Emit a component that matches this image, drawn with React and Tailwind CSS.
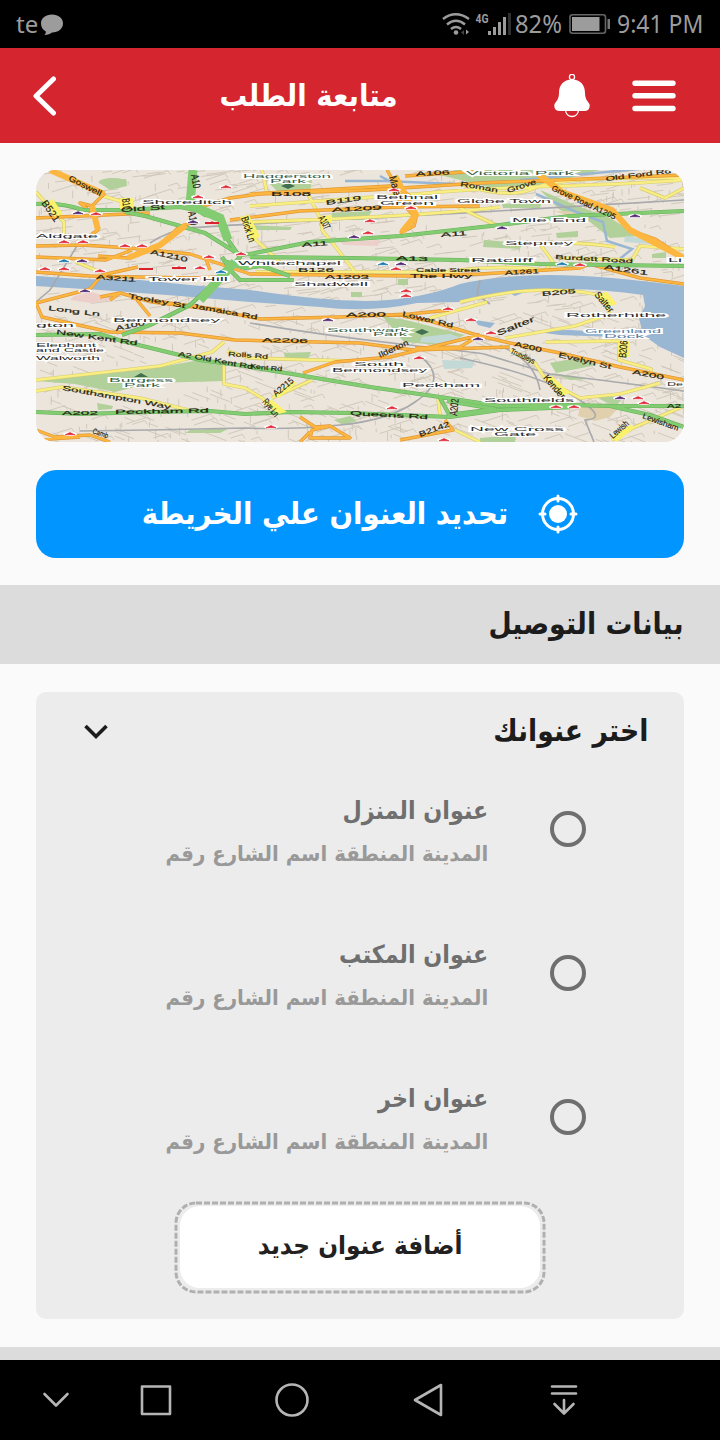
import React from "react";

const ROADS = {
  yellow: [
    "M36 192L52 210L64 222V234", "M100 195L133 205", "M126 207V199", "M262 170L267 193", "M306 190L322 222L322 230L338 250L358 276",
    "M250 206Q330 200 360 198T440 192T560 186T684 180", "M250 222Q320 220 390 216T500 207", "M246 215L256 240L280 262", "M460 184Q510 200 535 188T684 178",
    "M458 207L500 227", "M540 244L553 262L545 270Q500 265 460 270", "M560 258L632 260L640 246L684 249", "M510 245Q570 240 615 247", "M255 272H460",
    "M76 262L100 272", "M460 302Q510 290 545 290T602 296L610 314L575 326L505 338", "M545 342L620 341", "M619 348V360L651 369V376", "M510 350L535 363L546 380L580 398L620 394L660 383",
    "M36 380L160 366L212 352L224 342", "M36 391L62 387L140 398L188 410", "M224 364V384L245 388L262 398L280 414", "M227 351L250 358L350 361", "M312 380L272 398M438 398L440 415", "M684 406L635 427L612 440", "M455 430L480 442", "M640 188L665 198L684 188", "M430 318L487 302"
  ],
  orange: [
    "M50 170L104 194L92 206L80 203L94 215L98 230L92 234", "M36 246L82 245L130 248L190 254L250 274L410 276L480 274L580 268L590 264L640 278L684 284",
    "M36 257L106 260L132 250M98 256L128 258L160 245L178 228L190 223", "M36 272L90 276L190 278L222 277M36 303L90 289L102 275L138 267", "M190 210L230 198L260 194L370 190L480 183L684 175", "M36 218L150 213M230 220L300 211L400 207L480 206",
    "M250 194L390 186L400 201L416 218L414 226L400 233", "M387 170L395 184L410 196", "M405 176L480 171", "M538 174L562 192L612 210L630 230L655 239L684 258",
    "M36 303L42 317L110 332L180 333L235 340L360 343L413 350L510 347", "M100 297L120 293L152 302L210 309L260 319L340 317L410 314L449 310", "M137 300L150 316M120 293L110 300M131 298L222 310", "M403 316L430 321L480 336L510 343L560 353L620 367L684 380",
    "M303 373L335 362L390 357L480 335M480 335L460 347L415 348M205 257L210 270M300 417L315 427L330 426L350 438L310 438L312 430L330 426M310 432L300 442M445 420L453 430L400 440", "M36 430L55 437L90 435L110 442M36 440L80 437"
  ],
  green: [
    "M193 170L190 205L205 215L220 217L228 240L240 257L232 266L190 305L150 325L122 335", "M36 204Q60 202 83 210L125 210L180 207L205 212L222 219M125 212L145 216L205 233L240 255L250 254L310 242L400 236L500 225L570 216L684 211",
    "M250 257L350 258L460 260L540 264L684 266", "M222 257L232 272L240 280L294 280M224 261L245 268L262 266L290 276", "M36 335L100 334L122 341L200 360L245 366L310 377L370 387L440 397L500 406L570 405L610 406L684 406",
    "M36 412L80 414L150 412L210 411L245 414L290 412L350 413L450 417L500 410L575 407", "M440 398L450 416M447 401L495 409L455 414M610 406L650 415L684 427"
  ],
};

const LABELS = [
  [243, 178, 88, "Haggerston", "#365f45"], [270, 183, 36, "Park", "#365f45"], [466, 175, 108, "Victoria Park", "#365f45"], [142, 204, 90, "Shoreditch"],
  [376, 199, 62, "Bethnal"], [380, 204.500, 54, "Green"], [457, 203, 94, "Globe Town"], [512, 222, 74, "Mile End"], [505, 245, 68, "Stepney"], [36, 238, 62, "Aldgate"],
  [148, 281, 80, "Tower Hill"], [238, 265, 103, "Whitechapel"], [294, 286, 74, "Shadwell"], [471, 262, 62, "Ratcliff"], [113, 321.500, 107, "Bermondsey"], [36, 327, 38, "gton"],
  [36, 346.500, 60, "Elephant"], [36, 352, 68, "and Castle"], [36, 360, 64, "Walworth"], [566, 316.500, 100, "Rotherhithe"], [585, 333, 76, "Greenland", "#557da3"], [604, 338, 40, "Dock", "#557da3"],
  [327, 331.500, 82, "Southwark", "#365f45"], [373, 336, 34, "Park", "#365f45"], [354, 366, 50, "South"], [332, 372, 95, "Bermondsey"], [402, 387, 78, "Peckham"], [484, 402, 90, "Southfields"],
  [470, 430.500, 94, "New Cross"], [494, 435.500, 42, "Gate"], [109, 382, 64, "Burgess", "#365f45"], [124, 387, 36, "Park", "#365f45"], [668, 262, 14, "Li"], [667, 385.500, 16, "De"]
];

const NAMES = [
  [68, 180, 36, "Goswell", 27], [191, 175, 14, "A10", 80], [188, 212, 14, "A10", 80], [41, 203, 24, "B521", 55], [122, 199, 11, "B10", 82], [121, 212, 44, "Old St", -4],
  [150, 254, 38, "A1210", 12], [96, 279, 40, "A3211", 4], [128, 298, 58, "Tooley St", 10], [241, 218, 26, "Brick Ln", 72], [271, 196, 40, "B108", 0], [326, 205, 36, "B119", -8], [332, 212, 50, "A1209", -3],
  [318, 218, 14, "A107", 60], [389, 177, 20, "Mare", 75], [416, 176, 34, "A106", -3], [460, 186, 38, "Roman", 10], [508, 193, 30, "Grove", -18], [551, 190, 70, "Grove Road A1205", 25], [606, 181, 66, "Old Ford Rd", -7],
  [302, 247, 26, "A11", -4], [441, 237, 26, "A11", -4], [396, 260, 32, "A13", 2], [298, 272, 36, "B126", 0], [325, 279, 44, "A1203", 0], [416, 272, 64, "Cable Street", 0], [410, 278, 62, "The Hwy", 0], [505, 275, 34, "A1261", -3], [604, 269, 44, "A1261", 8], [555, 259, 78, "Burdett Road", 3],
  [48, 310, 52, "Long Ln", 7], [116, 331, 30, "A100", -12], [56, 334, 82, "New Kent Rd", 8], [178, 356, 76, "A2 Old Kent Rd", 10], [228, 356, 40, "Rolls Rd", 4], [62, 390, 110, "Southampton Way", 10], [62, 415, 36, "A202", 0], [115, 414, 94, "Peckham Rd", -1], [350, 415, 78, "Queens Rd", 3],
  [192, 308, 66, "Jamaica Rd", 10], [346, 317, 40, "A200", -1], [402, 316, 52, "Lower Rd", 13], [262, 342, 46, "A2206", 1], [380, 358, 32, "Ilderton", -25], [250, 368, 32, "Kent Rd", 6], [514, 346, 28, "A200", 13], [558, 357, 54, "Evelyn St", 13], [632, 374, 32, "A200", 10], [498, 336, 40, "Salter", -22],
  [542, 296, 34, "B205", -5], [594, 295, 24, "Salter", 50], [626, 358, 17, "B206", -85], [510, 353, 26, "Trundleys", 25], [543, 378, 28, "Kender", 50], [457, 416, 17, "A202", -85], [262, 402, 20, "Rye Ln", 50], [276, 397, 24, "A2215", -40], [420, 437, 32, "B2142", -20], [613, 439, 22, "Lewish", -42], [642, 418, 38, "Lewisham", 20], [667, 408, 14, "A2", 0], [92, 433, 16, "Camb", 20]
];

const STATIONS = [
  [78, 213, 1], [96, 214], [64, 242], [83, 242], [125, 246], [142, 246], [64, 261, 2], [82, 261, 1], [45, 269], [64, 269], [100, 271], [85, 291, 1], [198, 197], [226, 187], [193, 222, 1], [212, 223], [179, 268], [200, 268], [241, 254], [209, 257], [221, 272, 2],
  [394, 190], [411, 208], [370, 221], [368, 233], [354, 237, 1], [383, 264, 2], [401, 264, 1], [396, 269], [406, 291], [406, 296], [502, 228, 1], [635, 216, 1], [562, 264, 2], [580, 265], [448, 309], [471, 320], [478, 339, 1], [491, 333], [419, 358], [392, 408], [556, 407], [574, 407], [620, 398, 1], [638, 398], [644, 403], [70, 434], [271, 427], [444, 440], [328, 320, 1]
];
const STATION_COLORS = ["#df2935", "#50246f", "#1479ad"];

function streets() {
  let seed = 17;
  const rnd = () => ((seed = (seed * 16807) % 2147483647) / 2147483647);
  let d = "";
  for (let i = 0; i < 1250; i++) {
    const x = 36 + rnd() * 648;
    const y = 170 + rnd() * 272;
    const l = 6 + rnd() * 19;
    const r = rnd();
    if (r < 0.36) d += `M${x.toFixed(1)} ${y.toFixed(1)}v${(3 + rnd() * 6).toFixed(1)}`;
    else if (r < 0.72) d += `M${x.toFixed(1)} ${y.toFixed(1)}l${l.toFixed(1)} ${(y > 310 ? l * 0.38 : -l * 0.12).toFixed(1)}`;
    else d += `M${x.toFixed(1)} ${y.toFixed(1)}l${l.toFixed(1)} ${(-l * 0.32).toFixed(1)}l3 4`;
  }
  return d;
}

function Roads({ list, edge, fill, width }) {
  const d = list.join("");
  return (
    <g fill="none" strokeLinejoin="round">
      <path d={d} stroke={edge} strokeWidth={width + 1.2} />
      <path d={d} stroke={fill} strokeWidth={width} />
    </g>
  );
}

function CityMap() {
  return (
    <svg viewBox="36 170 648 272" className="block h-[272px] w-full rounded-[20px]" fontFamily="Liberation Sans, Arial, sans-serif">
      <rect x="36" y="170" width="648" height="272" fill="#ebe5db" />
      <path d={streets()} fill="none" stroke="#cfc5b8" strokeWidth="0.9" />
      <g fill="#b1d09a">
        <path d="M455 170H600L540 186L500 190L440 175ZM540 190L575 205L610 218L640 236L610 238L590 222L560 210ZM98 182L126 179L127 186L110 190ZM270 184L312 180L310 191L278 192ZM332 213L372 211L366 220L330 220ZM382 316L410 321L465 335L440 345L404 342L394 330ZM36 381L155 368L200 360L226 364V381L150 383L115 392L75 384ZM550 363L582 357L597 365L556 373ZM552 373L590 379L570 380ZM97 403L113 406L112 409L98 410ZM284 353L311 352L308 359H285ZM334 420L350 416L357 421L343 425ZM596 397L625 396L615 407ZM502 204L542 201L540 208L503 208ZM556 233L578 231V237L557 238ZM484 240L522 243L520 249L483 247Z" />
        <ellipse cx="113" cy="182" rx="14" ry="4" />
        <path d="M351 292h11v5h-11zM398 279h10v6h-10zM250 225l42 2-2 3h-38zM480 438l35-3v7h-35zM190 430l40-2-10 5h-35zM652 254l14-2v6h-14z" />
      </g>
      <path d="M74 296L92 292L115 300L90 303L70 300ZM465 187L480 190L475 193L462 190ZM340 242L380 240L378 246L344 245Z" fill="#edcfc9" />
      <path d="M555 211L580 212L590 218L570 217ZM580 407L619 407L610 417L595 421L578 416Z" fill="#e0d0ae" />
      <path d="M422 337L450 334L468 340L445 344L420 342ZM442 360L475 361L472 368L444 369ZM625 236L655 240L650 244L624 242Z" fill="#c3d9d6" />
      <path d="M36 276L80 279L140 280L190 285L250 290Q340 304 388 300Q430 296 460 284Q500 275 550 275T684 286V358L660 347L643 335L639 318L645 306L643 295Q590 287 543 290T460 302L417 303Q370 313 320 307L250 302L180 296L100 290L36 286Z" fill="#99b6d3" />
      <path d="M508 292L530 282L540 286L515 296M530 331L570 330L603 332L620 329L640 332L615 337L560 335ZM475 320L495 323L490 328L478 325Z" fill="#99b6d3" />
      <path d="M380 176L395 184M536 194L574 211L603 222L607 241L632 249L606 270M520 180L650 168M345 181L385 181L455 184" fill="none" stroke="#99b6d3" strokeWidth="2.5" />
      <g fill="none" stroke="#a8a9ac" strokeWidth="1.6">
        <path d="M150 243Q170 230 190 228T330 220T480 212T684 200M250 323Q320 335 400 344T484 354L550 374L600 380L684 391M460 358Q540 375 575 397T585 420L594 442M420 356Q450 379 415 402Q390 420 340 425T245 428L150 430L80 431M500 346Q535 360 540 390M80 241L50 290L36 302M480 280L477 295L490 304" />
      </g>
      <Roads list={ROADS.yellow} edge="#d6ca70" fill="#f9ee82" width={2.4} />
      <Roads list={ROADS.orange} edge="#e09837" fill="#fdb63f" width={2.2} />
      <Roads list={ROADS.green} edge="#68b05c" fill="#83cc72" width={3} />
      <path d="M50 170L104 194M92 206L98 230M395 176L416 215L402 232M538 174L562 192L612 210L630 230L684 258M128 258L160 245L186 225" fill="none" stroke="#fdb63f" strokeWidth="6" />
      <path d="M193 170L190 205L220 218L228 240M235 262L200 300" fill="none" stroke="#83cc72" strokeWidth="9" />
      <g fill="#fbf16c">
        <path d="M120 198h13v11h-13zM45 203l8-4 10 15-8 3zM240 217l9-2 11 21-8 6zM320 216l12-1v8h-12zM618 341h12v16h-12zM543 377l9-1 18 17-8 3zM264 402l8-2 15 12-9 2zM595 295l12-3 10 12-10 3zM273 396l20-15 4 2-18 15zM612 437l18-12 5 2-18 15z" />
      </g>
      <g fill="#242111">
        {NAMES.map(([x, y, w, t, a], i) => (
          <text key={i} x={x} y={y} fontSize={5.8 + 5 * Math.abs(Math.sin((a * Math.PI) / 180))} textLength={w} lengthAdjust="spacingAndGlyphs" transform={`rotate(${a} ${x} ${y})`} stroke="#242111" strokeWidth="0.15">{t}</text>
        ))}
      </g>
      {STATIONS.map(([x, y, c = 0], i) => (
        <g key={i}>
          <ellipse cx={x} cy={y} rx="7" ry="2.1" fill="#fff" />
          <path d={`M${x - 5} ${y + 0.8}l5-2.2 5 2.2z`} fill={STATION_COLORS[c]} stroke={STATION_COLORS[c]} strokeWidth="0.6" />
        </g>
      ))}
      <path d="M139 268h14v2h-14zM172 267h14v2h-14zM205 222h14v2h-14z" fill="#d8232f" />
      <path d="M281 186l7-3 7 3-7 3zM134 377l7-4 7 4zM415 332l7-3 7 3-7 3z" fill="#42704f" />
      <g fontSize="6">
        {LABELS.map(([x, y, w, t, c = "#292929"], i) => (
          <text key={i} x={x} y={y} textLength={w} lengthAdjust="spacingAndGlyphs" fill={c} stroke="#fff" strokeWidth="2" paintOrder="stroke">{t}</text>
        ))}
      </g>
    </svg>
  );
}

function StatusBar() {
  return (
    <div className="flex h-12 items-center bg-black pr-4 pl-4 font-['Noto_Sans'] text-[25px] text-[#9c9c9c]">
      <span className="text-[24px] leading-none">te</span>
      <svg className="ml-0.5 size-6" viewBox="0 0 24 24" fill="#9c9c9c"><path d="M12 2.500C5.700 2.500 1 6.200 1 11.500c0 3.500 1.800 6.300 4.800 7.900.2 1.600-.5 2.600-1.400 3.600 3.300.1 5.600-1 7.600-2.500C18.500 20.300 23 16.800 23 11.500S18.300 2.500 12 2.500z" /></svg>
      <svg className="ml-auto h-9 w-[72px] shrink-0" viewBox="440 6 72 36" fill="none" stroke="#9c9c9c">
        <path d="M443 19Q455.500 9.500 469 19M447 24.500Q456 17 465 24.500M451 29Q456 25 461 29" strokeWidth="2.500" />
        <circle cx="456" cy="32.500" r="2.300" fill="#9c9c9c" stroke="none" />
        <path d="M466 29.500v5l3-2.500z" fill="#9c9c9c" stroke="none" />
        <path d="M461 32.500l3-2.500v5z" fill="#444" stroke="none" />
        <text x="475.500" y="23" fontFamily="Roboto, sans-serif" fontWeight="bold" fontSize="13.500" textLength="13" lengthAdjust="spacingAndGlyphs" fill="#9c9c9c" stroke="none">4G</text>
        <path d="M489.500 35v-4M494.500 35v-8M499.500 35V22M504.500 35V17" strokeWidth="3" />
        <path d="M509.500 35V13" stroke="#303030" strokeWidth="3" />
      </svg>
      <span className="ml-[3px] w-[47px] leading-none whitespace-nowrap"><span className="inline-block origin-left scale-x-[0.95]">82%</span></span>
      <svg className="ml-[6px] h-6 w-[43px] shrink-0" viewBox="568 12 43 24">
        <rect x="570" y="14.800" width="35.500" height="18.400" rx="2.500" fill="none" stroke="#666" strokeWidth="1.600" />
        <path d="M572 17h27.500v14H572z" fill="#9c9c9c" /><path d="M607.500 19h2.500v10h-2.500z" fill="#777" />
      </svg>
      <span className="ml-[6px] w-[87px] leading-none whitespace-nowrap"><span className="inline-block origin-left scale-x-[0.92]">9:41 PM</span></span>
    </div>
  );
}

function Header() {
  return (
    <header className="flex h-[95px] items-center bg-[#d5262f] pt-0.5 pr-[44px] pl-[32px] text-white">
      <svg className="h-10 w-6" viewBox="0 0 24 40" fill="none" stroke="#fff" strokeWidth="5" strokeLinecap="round" strokeLinejoin="round"><path d="M21.500 3L4 20L21.500 37" /></svg>
      <h1 dir="rtl" className="mr-[156px] ml-auto origin-right scale-x-[0.92] text-[30px] leading-none font-bold whitespace-nowrap">متابعة الطلب</h1>
      <svg className="h-11 w-9" viewBox="554 74 36 44">
        <circle cx="572" cy="77" r="2.600" fill="none" stroke="#fff" strokeWidth="1.300" />
        <path d="M565.500 110.500Q566.500 116.500 572 116.500T578.500 110.500" fill="none" stroke="#fff" strokeWidth="1.300" />
        <path d="M572 79.500C563.500 79.500 559 85 559 93C559 99 556.500 101 554.500 104Q553.300 111 560 111H584Q590.700 111 589.500 104C587.500 101 585 99 585 93C585 85 580.500 79.500 572 79.500Z" fill="#fff" />
      </svg>
      <svg className="ml-[42px] h-8 w-11" viewBox="0 0 44 32" stroke="#fff" strokeWidth="5.400" strokeLinecap="round"><path d="M3 3.200H41M3 15.800H41M3 28.500H41" /></svg>
    </header>
  );
}

function Option({ title }) {
  return (
    <div dir="rtl" className="flex h-36 shrink-0 pr-[98px]">
      <span className="mt-[23px] size-9 shrink-0 rounded-full border-4 border-[#6f6f6f]" />
      <div className="mr-[62px] pt-[6px] whitespace-nowrap">
        <div className="origin-right scale-x-[0.89] text-[25px] leading-[34px] font-bold text-[#6f6f6f]">{title}</div>
        <div className="mt-[10px] origin-right scale-x-[0.94] text-[21px] leading-[32px] font-bold text-[#999]">المدينة المنطقة اسم الشارع رقم</div>
      </div>
    </div>
  );
}

export default function App() {
  return (
    <div className="flex h-[1440px] w-[720px] flex-col overflow-hidden bg-[#fafafa] font-['DejaVu_Sans',sans-serif]">
      <StatusBar />
      <Header />
      <div className="px-9 pt-[27px]"><CityMap /></div>
      <div className="px-9 pt-7">
        <button dir="rtl" className="flex h-[88px] w-full items-center rounded-[20px] bg-[#0195ff] pr-[106px] text-white">
          <svg className="size-10" viewBox="0 0 40 40" fill="none" stroke="#fff"><circle cx="20" cy="20" r="15.500" strokeWidth="3" /><circle cx="20" cy="20" r="9" fill="#fff" stroke="none" /><path d="M20 2V7M20 33V38M2 20H7M33 20H38" strokeWidth="3" strokeLinecap="round" /></svg>
          <span className="mr-[30px] origin-right scale-x-[0.918] text-[30px] leading-none font-bold whitespace-nowrap">تحديد العنوان علي الخريطة</span>
        </button>
      </div>
      <div dir="rtl" className="mt-[27px] flex h-[79px] items-center bg-[#dcdcdc] pr-9 text-[#1c1c1c]">
        <h2 className="origin-right scale-x-[0.893] text-[30px] leading-none font-bold whitespace-nowrap">بيانات التوصيل</h2>
      </div>
      <section className="mx-9 mt-7 h-[628px] rounded-[10px] bg-[#ececec]">
        <div dir="rtl" className="flex h-[96px] items-start justify-between pt-[19px] pr-9 pl-12 text-[#1c1c1c]">
          <h3 className="origin-right scale-x-[0.89] text-[30px] leading-10 font-bold whitespace-nowrap">اختر عنوانك</h3>
          <svg className="mt-[9px] size-6" viewBox="0 0 24 24" fill="none" stroke="currentColor" strokeWidth="3.600"><path d="M1.500 6L12 16.500L22.500 6" /></svg>
        </div>
        <Option title="عنوان المنزل" />
        <Option title="عنوان المكتب" />
        <div className="h-[125px]"><Option title="عنوان اخر" /></div>
        <div className="relative mx-auto flex h-[93px] w-[372px] items-center justify-center p-[6px]">
          <svg className="absolute inset-0 h-full w-full" viewBox="0 0 372 93" fill="none"><rect x="2" y="2" width="368" height="89" rx="20" stroke="#b0b0b0" strokeWidth="3" strokeDasharray="6 2" /></svg>
          <button dir="rtl" className="h-[82px] w-full rounded-[20px] bg-white text-[#212121]"><span className="inline-block scale-x-[0.93] text-[25px] leading-none font-bold whitespace-nowrap">أضافة عنوان جديد</span></button>
        </div>
      </section>
      <div className="mt-7 h-[13px] bg-[#dcdcdc]" />
      <nav className="flex h-20 shrink-0 items-center bg-black">
        <svg className="h-20 w-[720px]" viewBox="0 0 720 80" fill="none" stroke="#b5b5b5" strokeWidth="2.600" strokeLinecap="round" strokeLinejoin="round">
          <path d="M44.500 34L56 45.500L67.500 34" /><rect x="142" y="26.500" width="28" height="27.500" /><circle cx="292" cy="40" r="15.500" /><path d="M441 25V55L415 40Z" />
          <path d="M552 26.500H576M552 33.500H576M564 40V53M554.500 44L564 53.500L573.500 44" />
        </svg>
      </nav>
    </div>
  );
}
